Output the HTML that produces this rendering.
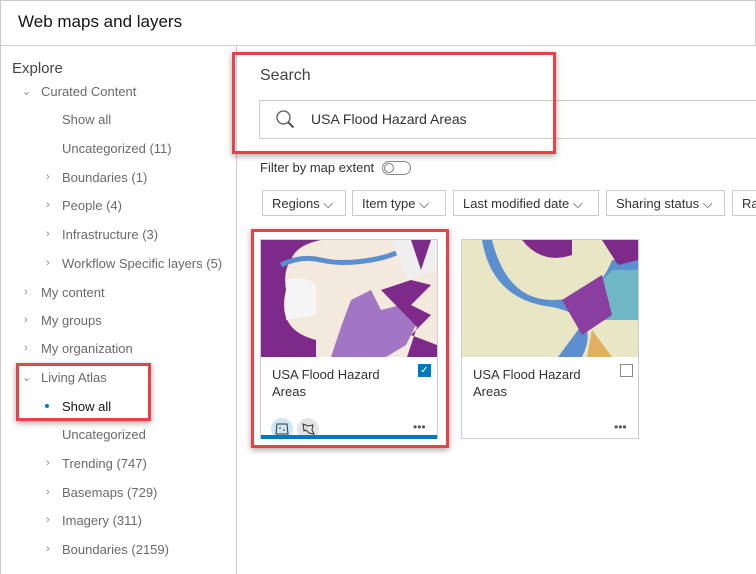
<!DOCTYPE html><html><head><style>
*{margin:0;padding:0;box-sizing:border-box}
body{width:756px;height:574px;overflow:hidden;background:#fff;font-family:"Liberation Sans",sans-serif;color:#4a4a4a;position:relative}
.a{position:absolute;white-space:nowrap}
.t{font-size:13px;color:#6a6a6a}
.chev{font-size:11px;color:#888}
.btn{position:absolute;top:190px;height:26px;border:1px solid #ccc;font-size:13px;color:#333;padding:5px 9px;white-space:nowrap;overflow:hidden}
.red{position:absolute;border:3px solid #e8414a;box-shadow:0 2px 6px rgba(0,0,0,.35)}
.card{position:absolute;top:239px;width:178px;height:200px;border:1px solid #ccc;background:#fff}
</style></head><body>
<div class="a" style="left:0;top:0;width:756px;height:46px;border:1px solid #ccc;border-bottom:1px solid #ccc"></div>
<div class="a" style="left:18px;top:12px;font-size:17px;color:#151515">Web maps and layers</div>
<div class="a" style="left:236px;top:46px;width:1px;height:528px;background:#ccc"></div>
<div class="a" style="left:0;top:46px;width:1px;height:528px;background:#ccc"></div>
<div class="a" style="left:12px;top:60px;font-size:15px;color:#444">Explore</div>
<div class="a chev" style="left:22px;top:85px">⌄</div><div class="a t" style="left:41px;top:84px">Curated Content</div>
<div class="a t" style="left:62px;top:112px">Show all</div>
<div class="a t" style="left:62px;top:141px">Uncategorized (11)</div>
<div class="a chev" style="left:46px;top:171px">›</div><div class="a t" style="left:62px;top:170px">Boundaries (1)</div>
<div class="a chev" style="left:46px;top:199px">›</div><div class="a t" style="left:62px;top:198px">People (4)</div>
<div class="a chev" style="left:46px;top:228px">›</div><div class="a t" style="left:62px;top:227px">Infrastructure (3)</div>
<div class="a chev" style="left:46px;top:257px">›</div><div class="a t" style="left:62px;top:256px">Workflow Specific layers (5)</div>
<div class="a chev" style="left:24px;top:286px">›</div><div class="a t" style="left:41px;top:285px">My content</div>
<div class="a chev" style="left:24px;top:314px">›</div><div class="a t" style="left:41px;top:313px">My groups</div>
<div class="a chev" style="left:24px;top:342px">›</div><div class="a t" style="left:41px;top:341px">My organization</div>
<div class="a chev" style="left:22px;top:371px">⌄</div><div class="a t" style="left:41px;top:370px">Living Atlas</div>
<div class="a" style="left:45px;top:404px;width:4px;height:4px;border-radius:2px;background:#0079c1"></div>
<div class="a" style="left:62px;top:399px;font-size:13px;color:#151515">Show all</div>
<div class="a t" style="left:62px;top:427px">Uncategorized</div>
<div class="a chev" style="left:46px;top:457px">›</div><div class="a t" style="left:62px;top:456px">Trending (747)</div>
<div class="a chev" style="left:46px;top:486px">›</div><div class="a t" style="left:62px;top:485px">Basemaps (729)</div>
<div class="a chev" style="left:46px;top:514px">›</div><div class="a t" style="left:62px;top:513px">Imagery (311)</div>
<div class="a chev" style="left:46px;top:543px">›</div><div class="a t" style="left:62px;top:542px">Boundaries (2159)</div>
<div class="red" style="left:16px;top:363px;width:135px;height:58px"></div>

<div class="a" style="left:260px;top:67px;font-size:16px;color:#444">Search</div>
<div class="a" style="left:259px;top:100px;width:500px;height:39px;border:1px solid #ccc"></div>
<svg class="a" style="left:274px;top:108px" width="24" height="24" viewBox="0 0 24 24"><circle cx="9.5" cy="9.5" r="6.5" fill="none" stroke="#555" stroke-width="1.3"/><path d="M14.5 14.5l5 5" stroke="#555" stroke-width="2.2"/></svg>
<div class="a" style="left:311px;top:111px;font-size:14px;color:#333">USA Flood Hazard Areas</div>
<div class="red" style="left:232px;top:52px;width:324px;height:102px"></div>
<div class="a" style="left:260px;top:160px;font-size:13px;color:#333">Filter by map extent</div>
<div class="a" style="left:382px;top:161px;width:29px;height:14px;border:1px solid #888;border-radius:7px"></div>
<div class="a" style="left:384px;top:163px;width:10px;height:10px;border:1px solid #777;border-radius:5px"></div>
<div class="btn" style="left:262px;width:84px">Regions ⌵</div>
<div class="btn" style="left:352px;width:94px">Item type ⌵</div>
<div class="btn" style="left:453px;width:146px">Last modified date ⌵</div>
<div class="btn" style="left:606px;width:119px">Sharing status ⌵</div>
<div class="btn" style="left:732px;width:40px">Ra</div>

<div class="card" style="left:260px">
<svg width="176" height="117" viewBox="0 0 176 117" style="display:block"><rect width="176" height="117" fill="#f3e9dc"/><path d="M0 0h60q-25 5-30 20q-8 10-5 30q-10 40 30 50v17H0z" fill="#7e2a8a"/><path d="M25 40q20-5 30 5v30l-30 5z" fill="#f5f5f5"/><path d="M20 25q20-10 40-5t50 0t40-18" stroke="#5a8fcf" stroke-width="5" fill="none"/><path d="M90 60l20-10 10 20 20-5 15 20-10 20-20 12H70l10-30z" fill="#a276c4"/><path d="M120 50l30-10 20 5-20 20 20 10-20 20 26 10v12h-30l10-30z" fill="#7e2a8a"/><path d="M130 0h46v30l-30 10z" fill="#f0efef"/><path d="M150 0h20l-10 30z" fill="#7e2a8a"/></svg>
<div class="a" style="left:11px;top:126px;font-size:13px;line-height:17px;color:#333;white-space:normal;width:120px">USA Flood Hazard Areas</div>
<div class="a" style="left:157px;top:124px;width:13px;height:13px;background:#0079c1;color:#fff;font-size:10px;line-height:13px;text-align:center">✓</div>
<div class="a" style="left:10px;top:178px;width:22px;height:22px;border-radius:11px;background:#cde6f5"></div>
<svg class="a" style="left:14px;top:182px" width="14" height="14" viewBox="0 0 14 14"><path d="M2 2h10l1 10H1z" fill="none" stroke="#333"/><circle cx="5" cy="6" r=".8" fill="#333"/><circle cx="9" cy="8" r=".8" fill="#333"/></svg>
<div class="a" style="left:36px;top:178px;width:22px;height:22px;border-radius:11px;background:#e4e4e4"></div>
<svg class="a" style="left:40px;top:182px" width="14" height="14" viewBox="0 0 14 14"><path d="M2 2l5 2 5-1-1 5 2 4-5-1-3-3-2 1z" fill="none" stroke="#333"/></svg>
<div class="a" style="left:152px;top:180px;font-size:12px;color:#555">•••</div>
<div class="a" style="left:0;top:195px;width:176px;height:4px;background:#0079c1"></div>
</div>
<div class="red" style="left:251px;top:229px;width:198px;height:219px;background:transparent"></div>
<div class="card" style="left:461px">
<svg width="176" height="117" viewBox="0 0 176 117" style="display:block"><rect width="176" height="117" fill="#e8e6c4"/><path d="M30 0q15 60 60 60t60-40h26v30q-40 0-60 40l-20 27H120q20-40-30-50Q30 60 20 0z" fill="#5b8fcf"/><path d="M150 30h26v50h-40l-15-20z" fill="#6fb7c4"/><path d="M60 0h50v15q-30 10-50-15zM140 0h36v20l-20 5z" fill="#7e2a8a"/><path d="M100 60l40-25 10 40-30 20z" fill="#8a3fa0"/><path d="M130 90l20 27h-25z" fill="#e0b060"/></svg>
<div class="a" style="left:11px;top:126px;font-size:13px;line-height:17px;color:#333;white-space:normal;width:120px">USA Flood Hazard Areas</div>
<div class="a" style="left:158px;top:124px;width:13px;height:13px;border:1px solid #888"></div>
<div class="a" style="left:152px;top:180px;font-size:12px;color:#555">•••</div>
</div>
</body></html>
